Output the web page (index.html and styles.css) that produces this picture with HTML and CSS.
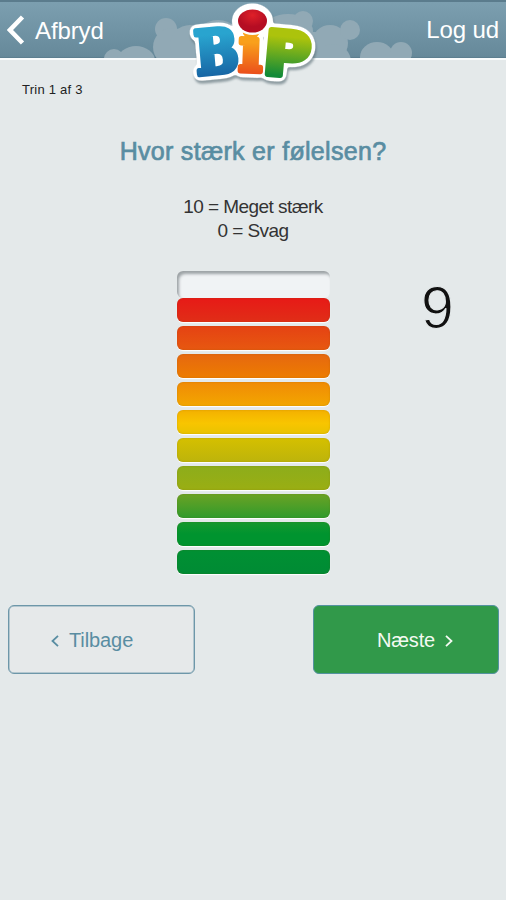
FILE: index.html
```html
<!DOCTYPE html>
<html lang="da">
<head>
<meta charset="utf-8">
<title>BiP</title>
<link rel="stylesheet" href="styles.css">
</head>
<body>
<header class="topbar">
  <svg class="clouds" width="506" height="58" viewBox="0 0 506 58" aria-hidden="true">
    <circle cx="114" cy="59" r="10"/><ellipse cx="136" cy="61" rx="19" ry="15"/>
    <circle cx="166" cy="29" r="11"/><circle cx="172" cy="47" r="19"/><circle cx="190" cy="45" r="20"/>
    <circle cx="218" cy="46" r="26"/><ellipse cx="288" cy="31" rx="25" ry="17"/><rect x="180" y="32" width="139" height="28"/>
    <circle cx="303" cy="21" r="10"/><circle cx="330" cy="43" r="18"/><circle cx="350" cy="30" r="10"/><circle cx="333" cy="62" r="18"/>
    <ellipse cx="377" cy="57" rx="17" ry="15"/><circle cx="401" cy="53" r="11"/><rect x="365" y="52" width="44" height="6"/>
  </svg>
  <a class="nav back">
    <svg width="18" height="30" viewBox="0 0 18 30" aria-hidden="true"><path d="M15.5 2 3 15 15.5 28"/></svg>
    <span>Afbryd</span>
  </a>
  <a class="nav logout">Log ud</a>
  <svg class="logo" width="146" height="96" viewBox="180 0 146 96" role="img" aria-label="BiP">
    <defs>
      <linearGradient id="blue" x1="0" y1="0" x2="0" y2="1"><stop offset=".25" stop-color="#29a4cf"/><stop offset=".85" stop-color="#1765a4"/></linearGradient>
      <linearGradient id="orange" x1="0" y1="0" x2="0" y2="1"><stop offset=".4" stop-color="#f9a01b"/><stop offset=".85" stop-color="#ea4e1b"/></linearGradient>
      <linearGradient id="green" x1="0" y1="0" x2="0" y2="1"><stop offset=".25" stop-color="#acc30c"/><stop offset=".8" stop-color="#138b38"/></linearGradient>
      <radialGradient id="red" cx=".5" cy=".25"><stop offset="0" stop-color="#df2028"/><stop offset="1" stop-color="#b50d23"/></radialGradient>
      <filter id="sticker" x="-20%" y="-20%" width="140%" height="140%" color-interpolation-filters="sRGB">
        <feGaussianBlur in="SourceAlpha" stdDeviation="2.5" result="soft"/>
        <feComponentTransfer in="soft" result="edge"><feFuncA type="linear" slope="16" intercept="-.6"/></feComponentTransfer>
        <feFlood flood-color="#fff"/><feComposite in2="edge" operator="in" result="outline"/>
        <feGaussianBlur in="edge" stdDeviation="1.2"/><feOffset dx="1" dy="2.5" result="shade"/>
        <feFlood flood-color="#566a73" flood-opacity=".6"/><feComposite in2="shade" operator="in" result="shadow"/>
        <feMerge><feMergeNode in="shadow"/><feMergeNode in="outline"/><feMergeNode in="SourceGraphic"/></feMerge>
      </filter>
    </defs>
    <g class="letters" filter="url(#sticker)">
      <text class="b" transform="translate(197 74.5) rotate(-5) scale(.82 .96)">B</text>
      <text class="p" transform="translate(262 73.5) rotate(5) scale(1.03 .98)">P</text>
      <text class="i" transform="translate(238.5 70.5) rotate(2) scale(.98 .98)">i</text>
      <ellipse class="dot" cx="252.5" cy="21" rx="14.5" ry="11.5"/>
    </g>
  </svg>
</header>
<main>
  <p class="step">Trin 1 af 3</p>
  <h1><span>Hvor stærk er følelsen?</span></h1>
  <div class="legend"><p class="strong">10 = Meget stærk</p><p class="weak">0 = Svag</p></div>
  <section class="rating">
    <div class="scale">
      <i class="empty"></i>
      <i class="l9"></i><i class="l8"></i><i class="l7"></i><i class="l6"></i><i class="l5"></i>
      <i class="l4"></i><i class="l3"></i><i class="l2"></i><i class="l1"></i><i class="l0"></i>
    </div>
    <output>9</output>
  </section>
  <nav class="actions">
    <a class="btn prev"><svg width="8" height="12" viewBox="0 0 8 12" aria-hidden="true"><path d="M7 .8 1.5 6 7 11.2"/></svg><span>Tilbage</span></a>
    <a class="btn next"><span>Næste</span><svg width="8" height="12" viewBox="0 0 8 12" aria-hidden="true"><path d="M1 .8 6.5 6 1 11.2"/></svg></a>
  </nav>
</main>
</body>
</html>
```
FILE: styles.css
```css
* { box-sizing: border-box; }
body {
  margin: 0;
  min-height: 900px;
  background: #e4e9ea;
  color: #222;
  font-family: "Liberation Sans", Arial, sans-serif;
}
p, h1 { margin: 0; }
.topbar {
  position: relative;
  display: flex;
  justify-content: space-between;
  height: 60px;
  padding: 0 7px;
  border-top: 2px solid #5b7c8d;
  border-bottom: 2px solid #f8fbfc;
  background: linear-gradient(#7c9fb0, #66899a 97%, #587a8b);
}
.clouds { position: absolute; left: 0; top: -2px; fill: #91a9b5; }
.logo { position: absolute; left: 180px; top: -2px; z-index: 2; }
.nav { position: relative; display: flex; color: #fff; font-size: 24px; line-height: 28px; white-space: nowrap; }
.back { gap: 10px; padding-top: 13px; }
.back svg { fill: none; stroke: #fff; stroke-width: 4.5; }
.back span { padding-top: 2px; letter-spacing: -.1px; }
.logout { padding-top: 14px; letter-spacing: -.1px; }
.letters { font: bold 62px "DejaVu Serif", serif; }
.letters text { stroke-width: 6px; stroke-linejoin: round; }
.b { fill: url(#blue); stroke: url(#blue); }
.letters .i { fill: url(#orange); stroke: url(#orange); }
.letters .p { fill: url(#green); stroke: url(#green); font-family: "DejaVu Sans", sans-serif; }
.dot { fill: url(#red); stroke: #fff; stroke-width: 5px; paint-order: stroke; }
.step { padding: 21px 0 0 22px; font-size: 13px; line-height: 18px; letter-spacing: .25px; }
h1 {
  margin-top: 37px;
  color: #598da2;
  font-size: 25px;
  line-height: 30px;
  text-align: center;
  font-weight: normal;
  letter-spacing: .3px;
  -webkit-text-stroke: .7px #598da2;
}
.legend { margin-top: 29px; font-size: 19px; line-height: 24px; text-align: center; letter-spacing: -.55px; color: #333; }
.rating { display: grid; grid-template-columns: 177px 153px 1fr; margin-top: 28px; }
.scale { grid-column: 2; display: flex; flex-direction: column; gap: 4px; }
.scale i { height: 24px; border-radius: 6px; box-shadow: inset 0 0 2px #6b4b0040, 0 1px 1px #fff; }
.scale .empty { height: 27px; margin-bottom: -4px; background: #f0f3f5; box-shadow: inset 2px 3px 3px #9da3a6; }
.l9 { background: linear-gradient(#e71a17, #e02e17); }
.l8 { background: linear-gradient(#e54213, #e75810); }
.l7 { background: linear-gradient(#e66810, #ed7c00); }
.l6 { background: linear-gradient(#f08b06, #f3a600); }
.l5 { background: linear-gradient(#f4b000, #f8c500 55%, #e9c300); }
.l4 { background: linear-gradient(#d5c000, #bdb40b); }
.l3 { background: linear-gradient(#8dad1b, #9aae13); }
.l2 { background: linear-gradient(#6ba224, #309b2c); }
.l1 { background: linear-gradient(#16982e, #00942f 50%); }
.l0 { background: linear-gradient(#009033, #008b34); }
output { padding: 7px 0 0 91px; color: #111; font-size: 59px; line-height: 60px; -webkit-text-stroke: 1.2px #e4e9ea; }
.actions { display: flex; justify-content: space-between; margin-top: 31px; padding: 0 7px 0 8px; }
.btn { display: flex; align-items: center; width: 187px; height: 69px; padding-top: 2px; border: 1px solid #6d97a9; border-radius: 6px; font-size: 20px; }
.btn svg { fill: none; stroke: currentColor; stroke-width: 1.8; }
.prev { gap: 10px; padding-left: 42px; color: #598da2; background: #e6e9ea; box-shadow: inset 0 0 0 .5px #82a5b4; letter-spacing: -.1px; }
.next { gap: 10px; width: 186px; padding-left: 63px; color: #f4faf2; background: #31994a; border: 1px solid #5492a0; letter-spacing: -.2px; }
```
